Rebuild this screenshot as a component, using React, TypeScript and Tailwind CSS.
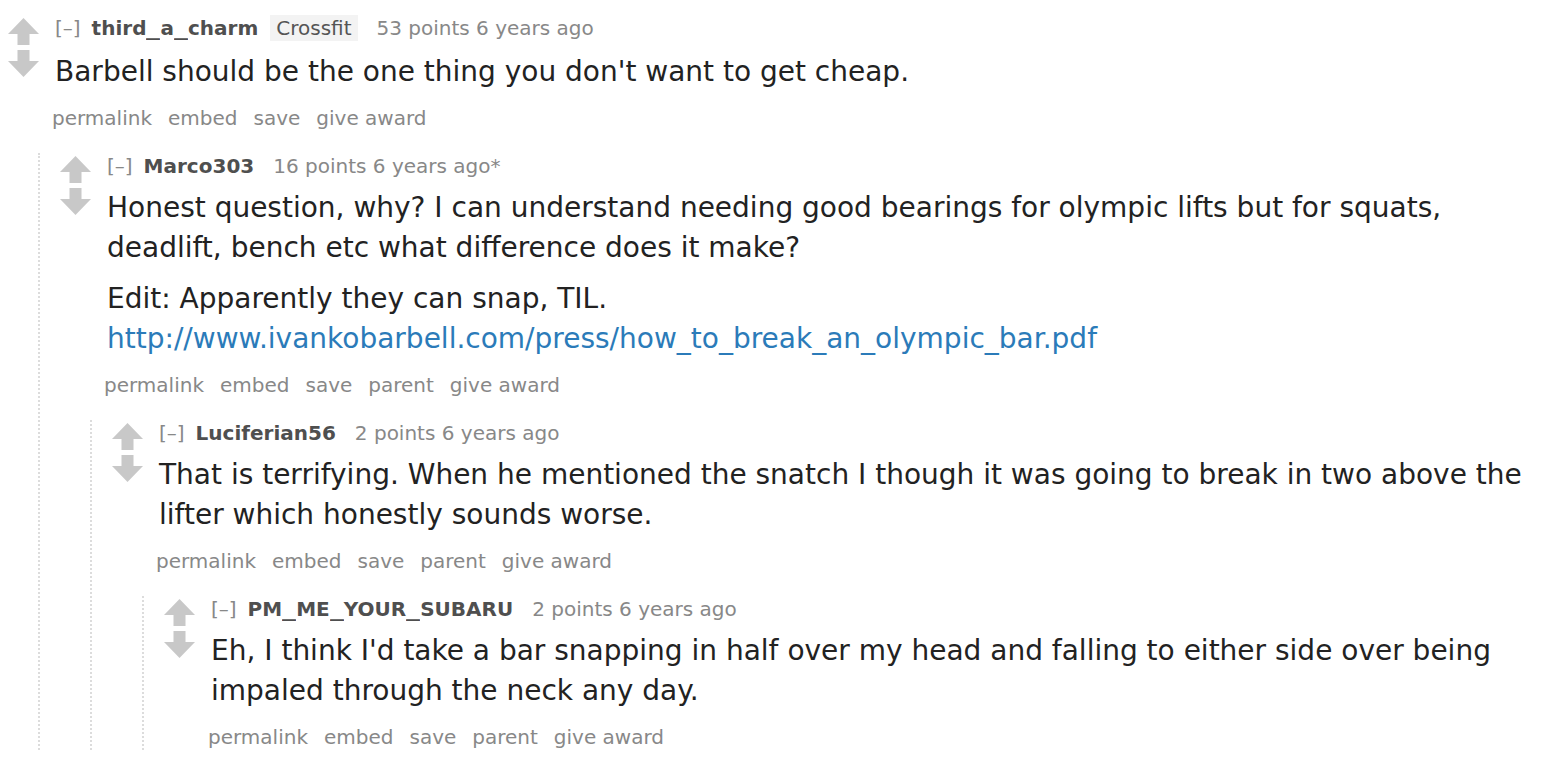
import React from "react";

type C = {
  author: string;
  flair?: string;
  score: string;
  time: string;
  edited?: boolean;
  body: React.ReactNode[];
  buttons: string[];
  children?: C[];
};

const data: C = {
  author: "third_a_charm",
  flair: "Crossfit",
  score: "53 points",
  time: "6 years ago",
  body: ["Barbell should be the one thing you don't want to get cheap."],
  buttons: ["permalink", "embed", "save", "give award"],
  children: [
    {
      author: "Marco303",
      score: "16 points",
      time: "6 years ago",
      edited: true,
      body: [
        "Honest question, why? I can understand needing good bearings for olympic lifts but for squats, deadlift, bench etc what difference does it make?",
        <>
          Edit: Apparently they can snap, TIL.{" "}
          <a className="text-[#2b7bb9]" href="#">
            http://www.ivankobarbell.com/press/how_to_break_an_olympic_bar.pdf
          </a>
        </>,
      ],
      buttons: ["permalink", "embed", "save", "parent", "give award"],
      children: [
        {
          author: "Luciferian56",
          score: "2 points",
          time: "6 years ago",
          body: [
            "That is terrifying. When he mentioned the snatch I though it was going to break in two above the lifter which honestly sounds worse.",
          ],
          buttons: ["permalink", "embed", "save", "parent", "give award"],
          children: [
            {
              author: "PM_ME_YOUR_SUBARU",
              score: "2 points",
              time: "6 years ago",
              body: [
                "Eh, I think I'd take a bar snapping in half over my head and falling to either side over being impaled through the neck any day.",
              ],
              buttons: ["permalink", "embed", "save", "parent", "give award"],
            },
          ],
        },
      ],
    },
  ],
};

function Up() {
  return (
    <svg width="31" height="27" viewBox="0 0 31 27" className="block">
      <polygon points="15.5,0 31,16 21.5,16 21.5,27 9.5,27 9.5,16 0,16" fill="#c8c8c8" />
    </svg>
  );
}
function Down() {
  return (
    <svg width="31" height="27" viewBox="0 0 31 27" className="block">
      <polygon points="9.5,0 21.5,0 21.5,11 31,11 15.5,27 0,11 9.5,11" fill="#c8c8c8" />
    </svg>
  );
}

function Author({ name }: { name: string }) {
  const parts = name.split("_");
  return (
    <span className="ml-[11px] font-bold text-[#4f4f4f]">
      {parts.map((p, i) => (
        <React.Fragment key={i}>
          {i > 0 && <span className="inline-block scale-x-[1.4] mx-[2px]">_</span>}
          {p}
        </React.Fragment>
      ))}
    </span>
  );
}

function Comment({ c }: { c: C }) {
  return (
    <div>
      <div className="flex">
        <div className="w-[47px] shrink-0 pt-[3px] flex flex-col gap-[5px]">
          <Up />
          <Down />
        </div>
        <div className="flex-1 min-w-0">
          <div className="flex items-baseline text-[20px] leading-[26px] text-[#888] whitespace-nowrap">
            <span>[–]</span>
            <Author name={c.author} />
            {c.flair && (
              <span className="ml-[12px] bg-[#f3f3f3] text-[#555] px-[6px]">{c.flair}</span>
            )}
            <span className="ml-[19px]">
              {c.score} {c.time}
              {c.edited ? "*" : ""}
            </span>
          </div>
          <div
            className={
              (c.flair ? "mt-[11px]" : "mt-[9px]") +
              " text-[28px] leading-[40px] text-[#222] flex flex-col gap-[11px]"
            }
          >
            {c.body.map((p, i) => (
              <p key={i}>{p}</p>
            ))}
          </div>
          <div className="mt-[13px] -ml-[3px] flex gap-[16px] text-[20px] leading-[26px] text-[#888]">
            {c.buttons.map((b) => (
              <span key={b}>{b}</span>
            ))}
          </div>
        </div>
      </div>
      {c.children && (
        <div className="mt-[22px] ml-[30px] border-l-2 border-dotted border-[#dcdcdc] pl-[20px]">
          {c.children.map((ch, i) => (
            <Comment key={i} c={ch} />
          ))}
        </div>
      )}
    </div>
  );
}

export default function App() {
  return (
    <div
      className="w-[1565px] h-[759px] overflow-hidden bg-white pt-[15px] pl-[8px] pr-[14px]"
      style={{ fontFamily: 'Verdana, "DejaVu Sans", sans-serif' }}
    >
      <Comment c={data} />
    </div>
  );
}
